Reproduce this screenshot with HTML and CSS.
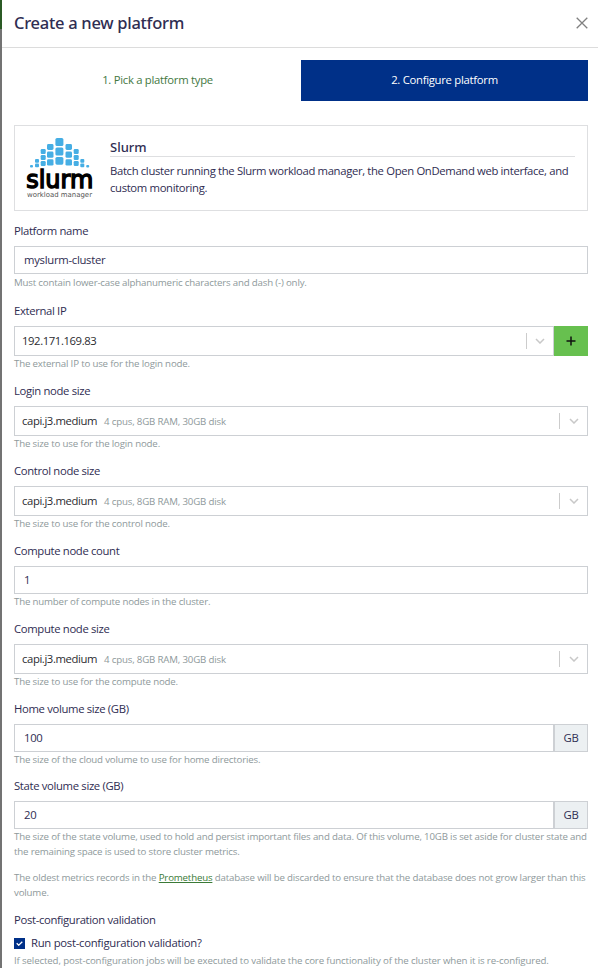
FILE: index.html
```html
<!DOCTYPE html>
<html lang="en">
<head>
<meta charset="utf-8">
<title>Create a new platform</title>
<link rel="stylesheet" href="styles.css">
</head>
<body>
<div class="backdrop"></div>
<main class="modal">
  <header class="modal-header">
    <h1>Create a new platform</h1>
    <svg class="close" viewBox="0 0 12 12"><path d="M.7.7l10.6 10.6M11.3.7L.7 11.3"/></svg>
  </header>
  <div class="modal-body">
    <nav class="tabs">
      <a class="tab"><span>1. Pick a platform type</span></a>
      <a class="tab active"><span>2. Configure platform</span></a>
    </nav>
    <section class="card">
      <svg class="logo" viewBox="0 0 66 62">
        <g fill="#46aee4">
          <rect x="3" y="27" width="3" height="2.5" rx="1"/>
          <rect x="8" y="21" width="4" height="3.7" rx="1"/><rect x="8" y="25.5" width="4" height="3.7" rx="1"/>
          <rect x="13.7" y="11" width="5" height="5" rx="1.2"/><rect x="13.7" y="17" width="5" height="5" rx="1.2"/><rect x="13.7" y="23" width="5" height="5" rx="1.2"/>
          <rect x="20" y="6" width="6.5" height="6" rx="1.4"/><rect x="20" y="13.5" width="6.5" height="6.3" rx="1.4"/><rect x="20" y="21.3" width="6.5" height="6.3" rx="1.4"/>
          <rect x="28.4" y="0" width="8" height="8" rx="1.6"/><rect x="28.4" y="9.5" width="8" height="8" rx="1.6"/><rect x="28.4" y="19" width="8" height="7.7" rx="1.6"/>
          <rect x="38.5" y="6" width="6.5" height="6" rx="1.4"/><rect x="38.5" y="13.5" width="6.5" height="6.3" rx="1.4"/><rect x="38.5" y="21.3" width="6.5" height="6.3" rx="1.4"/>
          <rect x="46.7" y="11" width="5" height="5" rx="1.2"/><rect x="46.7" y="17" width="5" height="5" rx="1.2"/><rect x="46.7" y="23" width="5" height="5" rx="1.2"/>
          <rect x="53.3" y="21" width="4" height="3.7" rx="1"/><rect x="53.3" y="25.5" width="4" height="3.7" rx="1"/>
          <rect x="59.2" y="27" width="3" height="2.5" rx="1"/>
        </g>
        <text class="logo-name" x="-.8" y="49.6" textLength="67" lengthAdjust="spacingAndGlyphs">slurm</text>
        <text class="logo-tag" x="0" y="58.6" textLength="65" lengthAdjust="spacingAndGlyphs">workload manager</text>
      </svg>
      <div class="card-text">
        <h2>Slurm</h2>
        <p>Batch cluster running the Slurm workload manager, the Open OnDemand web interface, and<br>custom monitoring.</p>
      </div>
    </section>

    <div class="field">
      <label>Platform name</label>
      <div class="control input">myslurm-cluster</div>
      <p class="help low">Must contain lower-case alphanumeric characters and dash (-) only.</p>
    </div>
    <div class="field">
      <label>External IP</label>
      <div class="group">
        <div class="control select"><span class="value">192.171.169.83</span><span class="arrow"><svg viewBox="0 0 10 6"><path d="M1 1l4 4 4-4"/></svg></span></div>
        <button class="add"><svg viewBox="0 0 10 10"><path d="M5 .5v9M.5 5h9"/></svg></button>
      </div>
      <p class="help">The external IP to use for the login node.</p>
    </div>
    <div class="field">
      <label>Login node size</label>
      <div class="control select"><span class="value">capi.j3.medium</span><small>4 cpus, 8GB RAM, 30GB disk</small><span class="arrow"><svg viewBox="0 0 10 6"><path d="M1 1l4 4 4-4"/></svg></span></div>
      <p class="help">The size to use for the login node.</p>
    </div>
    <div class="field">
      <label>Control node size</label>
      <div class="control select"><span class="value">capi.j3.medium</span><small>4 cpus, 8GB RAM, 30GB disk</small><span class="arrow"><svg viewBox="0 0 10 6"><path d="M1 1l4 4 4-4"/></svg></span></div>
      <p class="help">The size to use for the control node.</p>
    </div>
    <div class="field short">
      <label>Compute node count</label>
      <div class="control input">1</div>
      <p class="help">The number of compute nodes in the cluster.</p>
    </div>
    <div class="field">
      <label>Compute node size</label>
      <div class="control select"><span class="value">capi.j3.medium</span><small>4 cpus, 8GB RAM, 30GB disk</small><span class="arrow"><svg viewBox="0 0 10 6"><path d="M1 1l4 4 4-4"/></svg></span></div>
      <p class="help">The size to use for the compute node.</p>
    </div>
    <div class="field volume">
      <label>Home volume size (GB)</label>
      <div class="group"><div class="control input">100</div><span class="unit">GB</span></div>
      <p class="help">The size of the cloud volume to use for home directories.</p>
    </div>
    <div class="field state">
      <label>State volume size (GB)</label>
      <div class="group"><div class="control input">20</div><span class="unit">GB</span></div>
      <div class="help">
        <p>The size of the state volume, used to hold and persist important files and data. Of this volume, 10GB is set aside for cluster state and<br>the remaining space is used to store cluster metrics.</p>
        <p>The oldest metrics records in the <a>Prometheus</a> database will be discarded to ensure that the database does not grow larger than this<br>volume.</p>
      </div>
    </div>
    <div class="field">
      <label>Post-configuration validation</label>
      <div class="check"><span class="box"><svg viewBox="0 0 7 5"><path d="M.7 2.2l2 2L6.3.7"/></svg></span><span>Run post-configuration validation?</span></div>
      <p class="help">If selected, post-configuration jobs will be executed to validate the core functionality of the cluster when it is re-configured.</p>
    </div>
  </div>
</main>
</body>
</html>
```
FILE: styles.css
```css
* { box-sizing: border-box; margin: 0; padding: 0; }
body {
  display: flex;
  width: 598px;
  height: 968px;
  overflow: hidden;
  background: #fff;
  color: #2f2d52;
  font: 11.3px/16px "Open Sans", "Noto Sans", sans-serif;
  letter-spacing: -.28px;
}
svg { display: block; fill: none; }
.backdrop { flex: 0 0 2px; background: linear-gradient(#2b5a25 29px, #737373 29px); }
.modal { flex: 1; min-width: 0; }
.modal-header {
  display: flex;
  align-items: center;
  justify-content: space-between;
  height: 48px;
  padding: 0 10px 2px 12px;
  border-bottom: 1px solid #dcdcdc;
}
h1, h2 { font-family: "Noto Sans", sans-serif; font-weight: 500; white-space: nowrap; }
h1 { font-size: 16.5px; line-height: 24px; }
.close { width: 12px; height: 12px; stroke: #808080; stroke-width: 1.3; }
.modal-body { padding: 12px 10px 0 12px; }
.tabs { display: flex; height: 41px; }
.tab { flex: 1; display: flex; align-items: center; justify-content: center; padding-bottom: 1px; color: #44783f; }
.tab.active { background: #003088; color: #fff; }
.card {
  display: flex;
  height: 86px;
  margin: 24px 0 12px;
  padding: 12px;
  border: 1px solid #dedfe1;
}
.logo { flex: none; width: 66px; height: 62px; overflow: visible; }
.logo-name { font: 25px "DejaVu Sans", sans-serif; letter-spacing: 0; fill: #000; stroke: #000; stroke-width: 1.5px; }
.logo-tag { font: 7px "DejaVu Sans", sans-serif; letter-spacing: 0; fill: #555; }
.card-text { flex: 1; min-width: 0; margin-left: 17px; white-space: nowrap; }
h2 { height: 19px; border-bottom: 1px solid #dedfe1; font-size: 13px; line-height: 18px; letter-spacing: 0; }
.card-text p { margin-top: 5px; line-height: 17px; letter-spacing: -.345px; }
.field { height: 80px; }
.field.short { height: 78px; }
.field.volume { height: 77px; }
.field.state { height: 134px; }
label { display: block; height: 16px; margin-bottom: 7px; letter-spacing: -.34px; }
.control { display: flex; align-items: center; border: 1px solid #cdd0d4; }
.input { height: 28px; padding: 0 9px; }
.select { height: 30px; padding-left: 7px; color: #2b2b30; }
.group { display: flex; }
.group .control { flex: 1; }
.group .arrow { width: 27px; }
.value { letter-spacing: -.4px; }
.select small { margin-left: 7px; }
.arrow {
  display: flex;
  align-items: center;
  justify-content: center;
  width: 28px;
  height: 16px;
  margin-left: auto;
  border-left: 1px solid #ccc;
}
.arrow svg { width: 10px; height: 6px; stroke: #c8c8c8; stroke-width: 1.5; }
.add { display: flex; align-items: center; justify-content: center; width: 34px; border: 0; background: #67c04f; }
.add svg { width: 10px; height: 10px; stroke: #111; stroke-width: 1.5; }
.unit {
  display: flex;
  align-items: center;
  justify-content: center;
  width: 34px;
  border: 1px solid #cdd0d4;
  background: #ecf0f2;
}
.help, .select small { color: #8e999b; font-size: 9.7px; line-height: 15px; letter-spacing: -.175px; white-space: nowrap; }
.help.low { padding-top: 1px; }
.help p + p { margin-top: 12px; line-height: 14.5px; }
.help a { color: #3b7a37; text-decoration: underline; }
.check { display: flex; align-items: center; height: 16px; gap: 6px; }
.box { display: flex; align-items: center; justify-content: center; width: 11px; height: 11px; background: #003088; }
.box svg { width: 7px; height: 5px; stroke: #fff; stroke-width: 1.3; }
.check + .help { margin-top: 2px; letter-spacing: -.135px; }
```
